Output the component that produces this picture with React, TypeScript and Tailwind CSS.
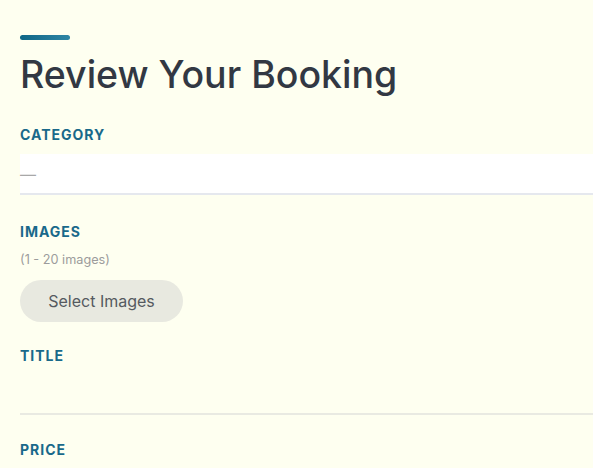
import React from "react";

const Label = ({ children }: { children: React.ReactNode }) => (
  <h3 className="text-[14px] font-bold tracking-[0.07em] text-[#19698a] leading-[20px]">
    {children}
  </h3>
);

export default function App() {
  return (
    <div
      className="min-h-screen w-full overflow-hidden bg-[#fefff0] pl-5 pt-[35px]"
      style={{ fontFamily: "Inter, 'Noto Sans', sans-serif" }}
    >
      {/* accent bar */}
      <div className="h-[5px] w-[50px] rounded-full bg-gradient-to-r from-[#0d6686] to-[#2f86a4]" />

      <h1 className="mt-[9px] text-[37.5px] font-medium leading-[52px] text-[#323843]">
        Review Your Booking
      </h1>

      {/* category */}
      <div className="mt-[24px]">
        <Label>CATEGORY</Label>
        <div className="mt-[9px] flex h-[41px] w-[600px] items-center border-b-2 border-[#e5e8ee] bg-white">
          <span className="text-[16px] text-[#a8a8a8]">—</span>
        </div>
      </div>

      {/* images */}
      <div className="mt-[27px]">
        <Label>IMAGES</Label>
        <p className="mt-[10px] text-[12.7px] leading-[16px] text-[#9c9c9c]">(1 - 20 images)</p>
        <button className="mt-[12px] h-[42px] w-[163px] rounded-full bg-[#e8e9e0] text-[16px] text-[#555a5f]">
          Select Images
        </button>
      </div>

      {/* title */}
      <div className="mt-[24px]">
        <Label>TITLE</Label>
        <div className="mt-[6px] h-[43px] w-[600px] border-b-2 border-[#e9eae2]" />
      </div>

      {/* price */}
      <div className="mt-[25px]">
        <Label>PRICE</Label>
      </div>
    </div>
  );
}
